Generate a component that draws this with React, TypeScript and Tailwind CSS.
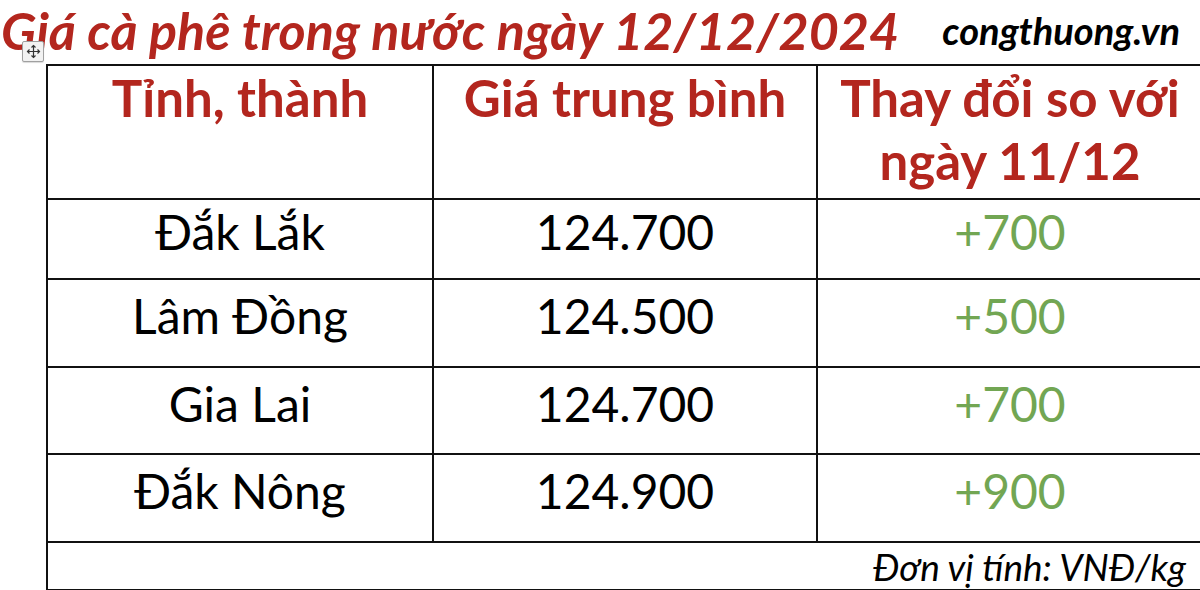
const rows = [
  { name: "Đắk Lắk", price: "124.700", change: "+700", h: "h-[80px]" },
  { name: "Lâm Đồng", price: "124.500", change: "+500", h: "h-[88px]" },
  { name: "Gia Lai", price: "124.700", change: "+700", h: "h-[87px]" },
  { name: "Đắk Nông", price: "124.900", change: "+900", h: "h-[88px]" },
];

export default function App() {
  return (
    <div className="w-[1200px] h-[590px] overflow-hidden bg-white font-['Lato',sans-serif] relative">
      {/* Title */}
      <div className="h-[64px] flex items-center">
        <h1 className="pl-[1px] pb-[4px] text-[52px] leading-none font-bold italic text-[#b3261e] whitespace-nowrap">
          Giá cà phê trong nước ngày 12/12/2024
        </h1>
        <span className="ml-auto mr-[20px] pb-[4px] text-[38px] leading-none font-bold italic text-black whitespace-nowrap">
          congthuong.vn
        </span>
      </div>

      {/* table move handle */}
      <div className="absolute left-[22px] top-[41px] w-[22px] h-[21px] border border-[#a0a0a0] rounded-[2px] bg-[#f2f2f2] shadow-[0_1px_1px_rgba(0,0,0,0.15)] flex items-center justify-center">
        <svg width="15" height="15" viewBox="0 0 15 15" fill="none" stroke="#333" strokeWidth="1.2">
          <path d="M7.5 1.5v12M1.5 7.5h12" />
          <path d="M5.5 3.5 7.5 1.5 9.5 3.5M5.5 11.5 7.5 13.5 9.5 11.5M3.5 5.5 1.5 7.5 3.5 9.5M11.5 5.5 13.5 7.5 11.5 9.5" />
        </svg>
      </div>

      <table className="ml-[46px] w-[1156px] table-fixed border-collapse text-black">
        <colgroup>
          <col className="w-[386px]" />
          <col className="w-[384px]" />
          <col className="w-[386px]" />
        </colgroup>
        <thead>
          <tr className="h-[134px]">
            <th className="border-2 border-[#111] align-top text-[51px] leading-[63px] font-bold text-[#b3261e]">
              Tỉnh, thành
            </th>
            <th className="border-2 border-[#111] align-top text-[51px] leading-[63px] font-bold text-[#b3261e]">
              Giá trung bình
            </th>
            <th className="border-2 border-[#111] align-top text-[51px] leading-[63px] font-bold text-[#b3261e]">
              Thay đổi so với
              <br />
              ngày 11/12
            </th>
          </tr>
        </thead>
        <tbody>
          {rows.map((r, i) => (
            <tr key={i} className={r.h}>
              <td className="border-2 border-[#111] text-center pb-[14px] text-[48px] leading-none">{r.name}</td>
              <td className="border-2 border-[#111] text-center pb-[14px] text-[48px] leading-none">{r.price}</td>
              <td className="border-2 border-[#111] text-center pb-[14px] text-[48px] leading-none text-[#72a653]">
                {r.change}
              </td>
            </tr>
          ))}
          <tr className="h-[48px]">
            <td colSpan={3} className="border-2 border-[#111] text-right pr-[16px] text-[37px] leading-none italic">
              Đơn vị tính: VNĐ/kg
            </td>
          </tr>
        </tbody>
      </table>
    </div>
  );
}
